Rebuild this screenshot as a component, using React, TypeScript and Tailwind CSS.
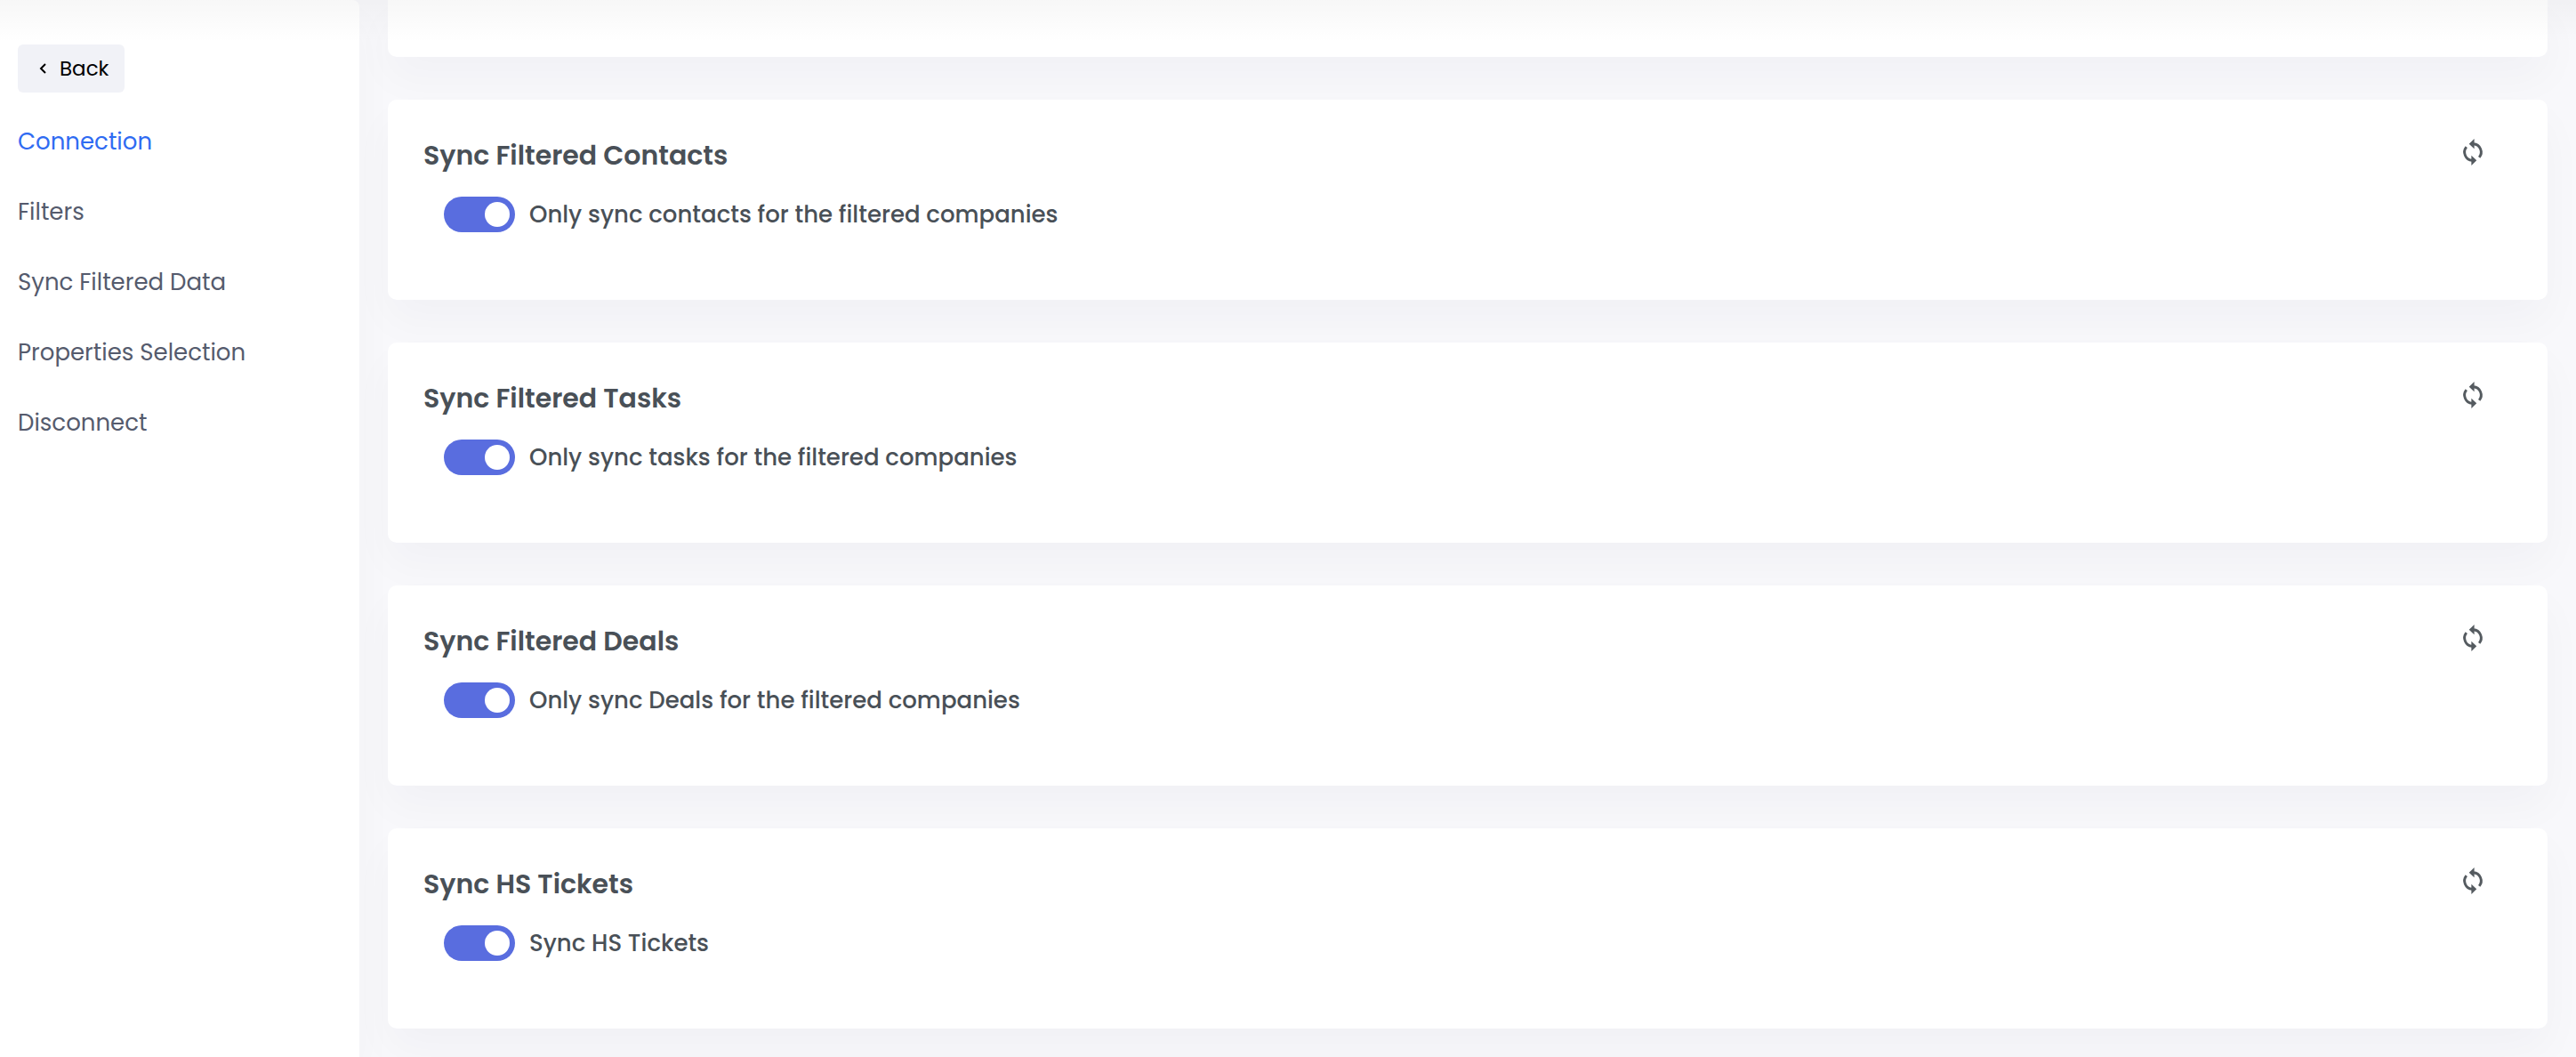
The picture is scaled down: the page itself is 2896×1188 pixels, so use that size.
import React, { useState } from "react";

const links = [
  "Connection",
  "Filters",
  "Sync Filtered Data",
  "Properties Selection",
  "Disconnect",
];

const settings = [
  {
    id: "contacts",
    title: "Sync Filtered Contacts",
    label: "Only sync contacts for the filtered companies",
  },
  {
    id: "tasks",
    title: "Sync Filtered Tasks",
    label: "Only sync tasks for the filtered companies",
  },
  {
    id: "deals",
    title: "Sync Filtered Deals",
    label: "Only sync Deals for the filtered companies",
  },
  { id: "tickets", title: "Sync HS Tickets", label: "Sync HS Tickets" },
];

function SyncIcon() {
  return (
    <svg viewBox="0 0 24 24" className="size-8" aria-hidden="true">
      <g fill="none" stroke="currentColor" strokeWidth="2.2">
        <path d="M12.5 5A7 7 0 0 1 17.4 16.4" />
        <path d="M11.5 19A7 7 0 0 1 6.6 7.6" />
      </g>
      <g fill="currentColor">
        <path d="M13.2 0.8V9.2L8.8 5z" />
        <path d="M10.8 23.2V14.8L15.2 19z" />
      </g>
    </svg>
  );
}

function Sidebar() {
  return (
    <aside className="w-[404px] shrink-0 rounded-tr-lg bg-white px-5 pt-[50px] shadow-[0_24px_48px_rgba(18,38,63,0.03)]">
      <button
        type="button"
        className="flex h-[54px] w-[120px] items-center gap-[15px] rounded-md bg-[#f1f2f7] pl-6 text-[23px] text-black"
      >
        <svg viewBox="0 0 8 12" className="h-3 w-2" fill="none" stroke="currentColor" strokeWidth="2">
          <path d="M7 1 2 6l5 5" />
        </svg>
        Back
      </button>
      <nav className="mt-[35px] flex flex-col gap-[39px]">
        {links.map((link) => (
          <a
            key={link}
            href="#"
            className={
              link === "Connection"
                ? "text-[26px] leading-10 text-[#2f6bf2]"
                : "text-[26px] leading-10 text-[#555b6d]"
            }
          >
            {link}
          </a>
        ))}
      </nav>
    </aside>
  );
}

function SettingCard({ id, title, label }: { id: string; title: string; label: string }) {
  const [checked, setChecked] = useState(true);

  return (
    <section className="flex h-[225px] items-start justify-between rounded-[10px] bg-white pt-[43px] pr-[68px] pl-10 shadow-[0_24px_48px_rgba(18,38,63,0.03)]">
      <div>
        <h2 className="text-[30px] leading-10 font-semibold text-[#495057]">{title}</h2>
        <div className="mt-[26px] ml-[23px] flex h-10 items-center gap-4">
          <input
            id={id}
            type="checkbox"
            checked={checked}
            onChange={() => setChecked(!checked)}
            className="flex h-10 w-20 shrink-0 appearance-none items-center rounded-full bg-[#adb5bd] px-1.5 before:size-7 before:rounded-full before:bg-white checked:justify-end checked:bg-[#596ddf]"
          />
          <label htmlFor={id} className="text-[26px] leading-10 font-medium text-[#495057]">
            {label}
          </label>
        </div>
      </div>
      <button type="button" aria-label={`Refresh ${title}`} className="text-[#555b60]">
        <SyncIcon />
      </button>
    </section>
  );
}

export default function App() {
  return (
    <div className="relative flex min-h-screen bg-[#f8f8fb] font-['Poppins','Inter',sans-serif]">
      <Sidebar />
      <main className="flex flex-1 flex-col gap-12 px-8 pb-8">
        <div className="h-16 rounded-b-[10px] bg-white shadow-[0_24px_48px_rgba(18,38,63,0.03)]" />
        {settings.map((setting) => (
          <SettingCard key={setting.id} {...setting} />
        ))}
      </main>
      {/* shade under the top bar */}
      <div className="pointer-events-none absolute inset-x-0 top-0 h-12 bg-linear-to-b from-black/3 to-transparent" />
    </div>
  );
}
